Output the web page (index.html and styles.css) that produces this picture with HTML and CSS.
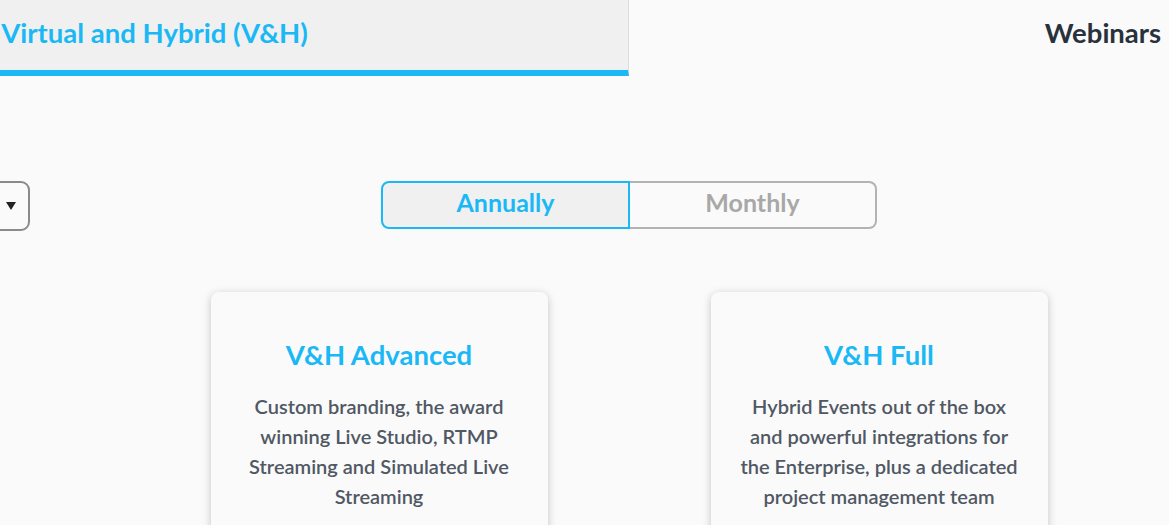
FILE: index.html
```html
<!DOCTYPE html>
<html>
<head>
<meta charset="utf-8">
<link rel="stylesheet" href="styles.css">
</head>
<body>
<div class="page">
  <nav class="tabs">
    <div class="tab tab-active">Virtual and Hybrid (V&amp;H)</div>
    <div class="tab">Webinars</div>
  </nav>
  <div class="controls">
    <div class="dropdown">
      <svg class="caret" width="10" height="8" viewBox="0 0 10 8"><path d="M0 0H10L5 8Z" fill="#222"/></svg>
    </div>
    <div class="toggle">
      <button class="toggle-btn toggle-on">Annually</button>
      <button class="toggle-btn toggle-off">Monthly</button>
    </div>
    <div></div>
  </div>
  <div class="cards">
    <div class="card">
      <h2 class="card-title">V&amp;H Advanced</h2>
      <p class="card-desc">Custom branding, the award winning Live Studio, RTMP Streaming and Simulated Live Streaming</p>
    </div>
    <div class="card">
      <h2 class="card-title">V&amp;H Full</h2>
      <p class="card-desc">Hybrid Events out of the box and powerful integrations for the Enterprise, plus a dedicated project management team</p>
    </div>
  </div>
</div>
</body>
</html>
```
FILE: styles.css
```css
html, body {
  margin: 0;
  padding: 0;
  background: #fafafa;
  overflow: hidden;
  font-family: Lato, "Open Sans", sans-serif;
}
.page {
  width: 1896px;
  margin-left: -319px;
}
.tabs {
  display: flex;
}
.tab {
  width: 948px;
  height: 76px;
  display: flex;
  align-items: center;
  justify-content: center;
  font-size: 27.5px;
  font-weight: 700;
  color: #29323c;
  box-sizing: border-box;
  padding-bottom: 6px;
  border-bottom: 6px solid transparent;
}
.tab-active {
  background: #f0f0f0;
  color: #1ab8f5;
  border-bottom-color: #1ab8f5;
  border-right: 1px solid #dedede;
}
.controls {
  display: grid;
  grid-template-columns: 1fr 496px 1fr;
  align-items: center;
  margin-top: 105px;
}
.dropdown {
  justify-self: start;
  margin-left: 199px;
  width: 150px;
  height: 50px;
  box-sizing: border-box;
  border: 2px solid #8a8a8a;
  border-radius: 9px;
  display: flex;
  align-items: center;
  justify-content: flex-end;
  padding: 0 12px 1px 0;
}
.caret {
  display: block;
}
.toggle {
  display: flex;
  height: 48px;
  margin-bottom: 2px;
}
.toggle-btn {
  font-family: inherit;
  font-size: 25px;
  font-weight: 700;
  height: 48px;
  margin: 0;
  padding: 0 0 7px;
  cursor: pointer;
}
.toggle-on {
  width: 249px;
  background: #f0f0f0;
  color: #1ab8f5;
  border: 2px solid #1ab8f5;
  border-radius: 8px 0 0 8px;
}
.toggle-off {
  width: 247px;
  background: #fafafa;
  color: #a8a8a8;
  border: 2px solid #b3b3b3;
  border-left: none;
  border-radius: 0 8px 8px 0;
}
.cards {
  display: flex;
  justify-content: center;
  gap: 163px;
  margin-top: 61px;
}
.card {
  width: 337px;
  min-height: 320px;
  background: #fafafa;
  border-radius: 8px;
  box-shadow: 0 2px 8px rgba(0, 0, 0, 0.22);
  padding: 44px 24px 0;
  box-sizing: border-box;
  text-align: center;
}
.card-title {
  margin: 0;
  font-size: 27.5px;
  font-weight: 700;
  color: #1ab8f5;
  line-height: 38px;
}
.card-desc {
  margin: 17px 0 0;
  font-size: 20px;
  font-weight: 600;
  line-height: 30px;
  color: #505864;
}
```
